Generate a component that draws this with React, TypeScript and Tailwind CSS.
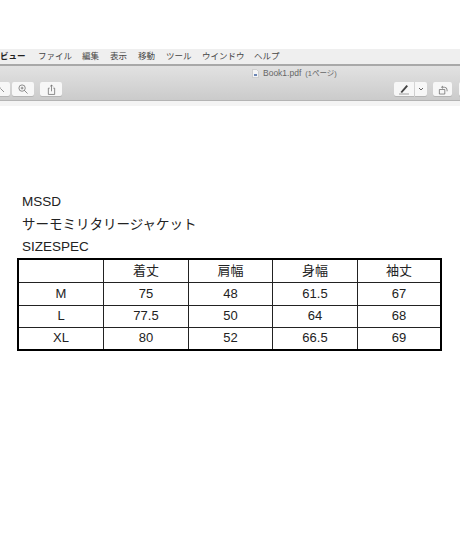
const menuItems = [
  { label: 'ビュー', className: 'w-[38px] font-semibold text-[#222]' },
  { label: 'ファイル', className: 'w-[44px]' },
  { label: '編集', className: 'w-[28px]' },
  { label: '表示', className: 'w-[28px]' },
  { label: '移動', className: 'w-[28px]' },
  { label: 'ツール', className: 'w-[36px]' },
  { label: 'ウインドウ', className: 'w-[52px]' },
  { label: 'ヘルプ', className: 'w-[30px]' },
]

const rows = [
  ['', '着丈', '肩幅', '身幅', '袖丈'],
  ['M', '75', '48', '61.5', '67'],
  ['L', '77.5', '50', '64', '68'],
  ['XL', '80', '52', '66.5', '69'],
]

function ToolButton({ className, children }: { className: string; children?: React.ReactNode }) {
  return (
    <div className={`flex h-[14px] shrink-0 items-center justify-center rounded-[2px] bg-[#f7f7f7] shadow-[0_1px_0_#b5b5b5] ${className}`}>
      {children}
    </div>
  )
}

function Toolbar() {
  return (
    <div className="relative flex h-[35px] items-end justify-between overflow-hidden border-b border-[#b4b4b4] bg-gradient-to-b from-[#e2e2e2] to-[#cbcbcb] pb-[4px]">
      <div className="flex">
        <ToolButton className="ml-[-8px] w-[18px]">
          <svg width="10" height="10" viewBox="0 0 10 10" fill="none" stroke="#777" strokeWidth="0.8">
            <path d="M5 5l3 3M2 3.5a3 3 0 0 1 3 1" />
          </svg>
        </ToolButton>
        <ToolButton className="ml-[2px] w-[22px]">
          <svg width="10" height="10" viewBox="0 0 11 11" fill="none" stroke="#666" strokeWidth="0.8">
            <circle cx="4.5" cy="4.5" r="3.5" />
            <path d="M7 7l3.5 3.5M3 4.5h3M4.5 3v3" />
          </svg>
        </ToolButton>
        <ToolButton className="ml-[6px] w-[22px]">
          <svg width="9" height="11" viewBox="0 0 10 12" fill="none" stroke="#666" strokeWidth="0.8">
            <path d="M3 4.5H1.5v7h7v-7H7M5 8V1M3.5 2.5L5 1l1.5 1.5" />
          </svg>
        </ToolButton>
      </div>
      <div className="absolute left-[252px] top-0 flex items-center font-['Liberation_Sans','Noto_Sans_CJK_JP',sans-serif] text-[8.5px] leading-[15px] text-[#666]">
        <svg width="7" height="9" viewBox="0 0 7 9" className="mr-[4px]">
          <path d="M0.5 0.5h4l2 2v6h-6z" fill="#f4f4f4" stroke="#b5b5b5" strokeWidth="0.5" />
          <path d="M2 5h3v2H2z" fill="#6b86b5" />
        </svg>
        <span>Book1.pdf</span>
        <span className="ml-[4px] text-[7.5px]">(1ページ)</span>
      </div>
      <div className="flex">
        <ToolButton className="w-[20px] rounded-r-none">
          <svg width="12" height="12" viewBox="0 0 12 12" fill="none">
            <path d="M2.5 9L8.5 2l1.5 1.2L4 10z" fill="#444" />
            <path d="M1 11h10" stroke="#888" strokeWidth="0.8" />
          </svg>
        </ToolButton>
        <ToolButton className="ml-px w-[12px] rounded-l-none">
          <svg width="6" height="5" viewBox="0 0 6 5" fill="none" stroke="#555" strokeWidth="0.9">
            <path d="M1 1l2 2 2-2" />
          </svg>
        </ToolButton>
        <ToolButton className="ml-[6px] w-[19px]">
          <svg width="10" height="11" viewBox="0 0 11 12" fill="none" stroke="#666" strokeWidth="0.8">
            <path d="M1.5 6h6v5h-6zM4 3.5h3a3 3 0 0 1 3 3V8M5.5 2L4 3.5 5.5 5" />
          </svg>
        </ToolButton>
        <ToolButton className="ml-[7px] mr-[-14px] w-[15px]" />
      </div>
    </div>
  )
}

function SizeTable() {
  return (
    <div className="ml-[17px] w-[425px] border-2 border-black text-[13px]">
      {rows.map((row, i) => (
        <div key={i} className={`grid h-[22.25px] grid-cols-[84px_85px_84px_85px_1fr] ${i > 0 ? 'border-t border-[#222]' : ''}`}>
          {row.map((cell, j) => (
            <div key={j} className={`flex items-center justify-center pb-px ${j > 0 ? 'border-l border-[#222]' : ''}`}>
              {cell}
            </div>
          ))}
        </div>
      ))}
    </div>
  )
}

export default function App() {
  return (
    <div className="h-[552px] w-[460px] overflow-hidden bg-white pt-[49px]">
      <div className="flex h-[15px] items-center overflow-hidden bg-[#efefef] pb-[2px] font-['Noto_Sans_CJK_JP',sans-serif] text-[8.5px] text-[#444]">
        {menuItems.map((item) => (
          <span key={item.label} className={`shrink-0 whitespace-nowrap ${item.className}`}>
            {item.label}
          </span>
        ))}
      </div>
      <div className="h-[2px] bg-[#a9a9a9]" />
      <Toolbar />
      <div className="h-[5px] bg-[#f4f4f4]" />
      <div className="pt-[85px] font-['Liberation_Sans','Noto_Sans_CJK_JP',sans-serif] text-[13.5px] text-[#222]">
        <div className="ml-[22px] flex h-[23px] items-center">MSSD</div>
        <div className="ml-[22px] flex h-[23px] items-center">サーモミリタリージャケット</div>
        <div className="ml-[22px] flex h-[21px] items-center">SIZESPEC</div>
        <SizeTable />
      </div>
    </div>
  )
}
